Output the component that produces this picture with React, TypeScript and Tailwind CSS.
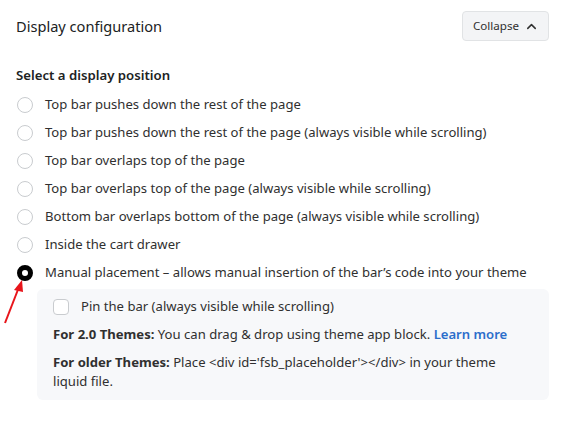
import { ChevronUp } from 'lucide-react';

const options = [
  'Top bar pushes down the rest of the page',
  'Top bar pushes down the rest of the page (always visible while scrolling)',
  'Top bar overlaps top of the page',
  'Top bar overlaps top of the page (always visible while scrolling)',
  'Bottom bar overlaps bottom of the page (always visible while scrolling)',
  'Inside the cart drawer',
];

function Radio({ checked }: { checked?: boolean }) {
  if (checked) {
    return <span className="w-4 h-4 shrink-0 rounded-full border-[5px] border-black bg-white" />;
  }
  return <span className="w-4 h-4 shrink-0 rounded-full border border-[#c9cccf] bg-white" />;
}

export default function App() {
  return (
    <div
      className="w-[564px] h-[423px] bg-white text-[#303030] relative overflow-hidden"
      style={{ fontFamily: '"Noto Sans", "Open Sans", sans-serif' }}
    >
      <div className="flex items-center justify-between pl-4 pr-[15px] pt-[11px]">
        <h2 className="text-[14.6px] leading-[29px] text-[#202223]">Display configuration</h2>
        <button className="h-[30px] pl-[10px] pr-[9px] flex items-center gap-[5px] rounded border border-[#e1e3e5] bg-[#f3f4f6] text-[11.6px] text-[#303030]">
          Collapse
          <ChevronUp className="w-[15px] h-[15px]" strokeWidth={2.4} />
        </button>
      </div>

      <div className="px-4 pt-[24px]">
        <div className="text-[13.2px] font-semibold leading-5 text-[#202223]">Select a display position</div>
        <div className="mt-[6px] flex flex-col">
          {options.map((o) => (
            <label key={o} className="flex items-center gap-3 h-7 text-[13.1px]">
              <span className="pl-[1px] flex"><Radio /></span>
              {o}
            </label>
          ))}
          <label className="flex items-center gap-3 h-7 text-[13.1px] whitespace-nowrap">
            <span className="pl-[1px] flex"><Radio checked /></span>
            Manual placement – allows manual insertion of the bar’s code into your theme
          </label>
        </div>

        <div className="ml-[21px] mr-[-1px] mt-[2px] rounded-md bg-[#f7f8fa] px-4 pt-[8px] pb-[9px] text-[13.1px] leading-[19px]">
          <label className="flex items-center gap-3">
            <span className="w-4 h-4 rounded border border-[#c9cccf] bg-white" />
            Pin the bar (always visible while scrolling)
          </label>
          <p className="mt-[9px]">
            <b className="font-bold">For 2.0 Themes:</b> You can drag &amp; drop using theme app block.{' '}
            <a className="text-[#2c6ecb] font-semibold">Learn more</a>
          </p>
          <p className="mt-[9px]">
            <b className="font-bold">For older Themes:</b> Place &lt;div id='fsb_placeholder'&gt;&lt;/div&gt; in your theme liquid file.
          </p>
        </div>
      </div>

      <svg className="absolute left-0 top-[273px]" width="30" height="54" viewBox="0 0 30 54">
        <line x1="5" y1="50" x2="19" y2="14" stroke="#e8151b" strokeWidth="2" />
        <polygon points="22,7 14,17 23,19" fill="#e8151b" />
      </svg>
    </div>
  );
}
